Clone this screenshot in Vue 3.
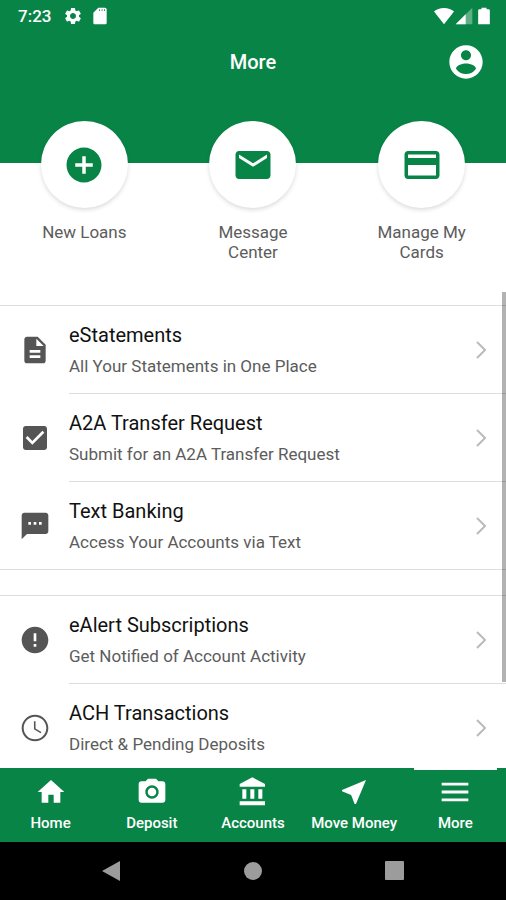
<template>
  <div class="screen">
    <header class="header">
      <div class="status-bar">
        <span class="time">7:23</span>
        <svg class="status-icon" viewBox="0 0 24 24"><path :d="icons.gear" /></svg>
        <svg class="status-icon sd-icon" viewBox="0 0 24 24"><path :d="icons.sdCard" /></svg>
        <span class="spacer"></span>
        <svg class="status-icon" viewBox="0 0 24 24"><path d="M12 22 0 6.500C3 4 7 2.500 12 2.500s9 1.500 12 4z" /></svg>
        <svg class="status-icon" viewBox="0 0 24 24">
          <path d="M2 22h20V2z" fill-opacity=".35" />
          <path d="M2 22h12V10z" />
        </svg>
        <svg class="status-icon" viewBox="0 0 24 24"><path d="M17.500 4H15V2H9v2H6.500Q5 4 5 5.500V22h14V5.500Q19 4 17.500 4z" /></svg>
      </div>
      <div class="title-bar">
        <h1 class="title">More</h1>
        <button class="account-button" aria-label="Account">
          <svg viewBox="0 0 24 24"><path :d="icons.account" /></svg>
        </button>
      </div>
    </header>

    <section class="shortcuts">
      <button v-for="item in shortcuts" :key="item.label" class="shortcut">
        <span class="shortcut-circle">
          <svg viewBox="0 0 24 24"><path :d="icons[item.icon]" /></svg>
        </span>
        <span class="shortcut-label">{{ item.label }}</span>
      </button>
    </section>

    <main class="content">
      <div class="scroll-area">
        <ul v-for="(group, index) in groups" :key="index" class="group">
          <li v-for="item in group" :key="item.title">
            <a href="#" class="row">
              <svg class="row-icon" viewBox="0 0 24 24"><path :d="icons[item.icon]" /></svg>
              <span class="row-body">
                <span class="row-text">
                  <span class="row-title">{{ item.title }}</span>
                  <span class="row-subtitle">{{ item.subtitle }}</span>
                </span>
                <svg class="chevron" viewBox="0 0 10 18"><path d="M1 1l8 8-8 8" /></svg>
              </span>
            </a>
          </li>
        </ul>
      </div>
      <div class="scroll-thumb"></div>
    </main>

    <nav class="tab-bar">
      <a
        v-for="tab in tabs"
        :key="tab.label"
        href="#"
        class="tab"
        :class="{ 'tab-active': tab.label === activeTab }"
        @click.prevent="activeTab = tab.label"
      >
        <svg viewBox="0 0 24 24"><path :d="icons[tab.icon]" /></svg>
        <span>{{ tab.label }}</span>
      </a>
    </nav>

    <div class="system-bar">
      <button aria-label="Back"><svg viewBox="0 0 20 20"><path d="M19 0v20L1 10z" /></svg></button>
      <button aria-label="Home"><svg viewBox="0 0 20 20"><circle cx="10" cy="10" r="9" /></svg></button>
      <button aria-label="Recent apps"><svg viewBox="0 0 20 20"><rect width="19" height="19" rx="1" /></svg></button>
    </div>
  </div>
</template>

<script setup>
import { ref } from 'vue'

const icons = {
  gear: 'M19.140 12.940c.040-.300.060-.610.060-.940 0-.320-.020-.640-.070-.940l2.030-1.580c.180-.140.230-.410.120-.610l-1.920-3.320c-.120-.220-.370-.290-.590-.220l-2.390.960c-.500-.380-1.030-.700-1.620-.940L14.400 2.810c-.040-.240-.240-.410-.480-.410h-3.840c-.240 0-.430.170-.470.410L9.250 5.350c-.590.240-1.130.570-1.620.940L5.240 5.330c-.220-.080-.470 0-.590.220L2.740 8.870c-.120.210-.080.470.120.610l2.030 1.580c-.050.300-.090.630-.090.940s.020.640.070.940l-2.030 1.580c-.180.140-.230.410-.120.610l1.920 3.320c.120.220.370.290.590.220l2.390-.960c.500.380 1.030.700 1.620.940l.360 2.540c.050.240.240.410.480.410h3.840c.240 0 .440-.170.470-.410l.360-2.540c.590-.240 1.130-.560 1.620-.940l2.390.960c.220.080.470 0 .590-.220l1.920-3.320c.120-.220.070-.470-.120-.610l-2.010-1.580zM12 15.600c-1.980 0-3.600-1.620-3.600-3.600s1.620-3.600 3.600-3.600 3.600 1.620 3.600 3.600-1.620 3.600-3.600 3.600z',
  sdCard: 'M18 2h-8L4 8v12c0 1.100.900 2 2 2h12c1.100 0 2-.900 2-2V4c0-1.100-.900-2-2-2zm-6 4h-1V4h1zm3 0h-1V4h1zm3 0h-1V4h1z',
  account: 'M12 2C6.480 2 2 6.480 2 12s4.480 10 10 10 10-4.480 10-10S17.520 2 12 2zm0 3c1.660 0 3 1.340 3 3s-1.340 3-3 3-3-1.340-3-3 1.340-3 3-3zm0 14.200c-2.500 0-4.710-1.280-6-3.220.030-1.990 4-3.080 6-3.080 1.990 0 5.970 1.090 6 3.080-1.290 1.940-3.500 3.220-6 3.220z',
  addCircle: 'M12 2C6.480 2 2 6.480 2 12s4.480 10 10 10 10-4.480 10-10S17.520 2 12 2zm5 11h-4v4h-2v-4H7v-2h4V7h2v4h4v2z',
  mail: 'M20 4H4c-1.100 0-1.990.900-1.990 2L2 18c0 1.100.900 2 2 2h16c1.100 0 2-.900 2-2V6c0-1.100-.900-2-2-2zm0 4l-8 5-8-5V6l8 5 8-5v2z',
  card: 'M20 4H4c-1.110 0-1.990.890-1.990 2L2 18c0 1.110.890 2 2 2h16c1.110 0 2-.890 2-2V6c0-1.110-.890-2-2-2zm0 14H4v-6h16v6zm0-10H4V6h16v2z',
  document: 'M14 2H6c-1.100 0-1.990.900-1.990 2L4 20c0 1.100.890 2 1.990 2H18c1.100 0 2-.900 2-2V8l-6-6zm2 16H8v-2h8v2zm0-4H8v-2h8v2zm-3-5V3.500L18.500 9H13z',
  checkbox: 'M19 3H5c-1.110 0-2 .900-2 2v14c0 1.100.890 2 2 2h14c1.110 0 2-.900 2-2V5c0-1.100-.890-2-2-2zm-9 14l-5-5 1.410-1.410L10 14.170l7.590-7.590L19 8l-9 9z',
  message: 'M20 2H4c-1.100 0-1.990.900-1.990 2L2 22l4-4h14c1.100 0 2-.900 2-2V4c0-1.100-.900-2-2-2zM9 11H7V9h2v2zm4 0h-2V9h2v2zm4 0h-2V9h2v2z',
  alert: 'M12 2C6.480 2 2 6.480 2 12s4.480 10 10 10 10-4.480 10-10S17.520 2 12 2zm1 15h-2v-2h2v2zm0-4h-2V7h2v6z',
  clock: 'M11.990 2C6.470 2 2 6.480 2 12s4.470 10 9.990 10C17.520 22 22 17.520 22 12S17.520 2 11.990 2zM12 20.500c-4.700 0-8.500-3.800-8.500-8.500S7.300 3.500 12 3.500s8.500 3.800 8.500 8.500-3.800 8.500-8.500 8.500zM12.400 7H11.200v6l5 3 .600-1-4.400-2.700z',
  home: 'M10 20v-6h4v6h5v-8h3L12 3 2 12h3v8z',
  camera: 'M9 2L7.170 4H4c-1.100 0-2 .900-2 2v12c0 1.100.900 2 2 2h16c1.100 0 2-.900 2-2V6c0-1.100-.900-2-2-2h-3.170L15 2H9zm3 15c-2.760 0-5-2.240-5-5s2.240-5 5-5 5 2.240 5 5-2.240 5-5 5zM12 8.800a3.200 3.200 0 1 0 0 6.400 3.200 3.200 0 0 0 0-6.400z',
  bank: 'M4 10v7h3v-7H4zm6 0v7h3v-7h-3zM2 22h19v-3H2v3zm14-12v7h3v-7h-3zm-4.500-9L2 6v2h19V6l-9.500-5z',
  arrow: 'M21 3L3 10.530v.980l6.840 2.650L12.480 21h.980L21 3z',
  menu: 'M2 19h20v-2.200H2V19zm0-5.900h20v-2.200H2v2.200zM2 5v2.200h20V5H2z'
}

const shortcuts = [
  { label: 'New Loans', icon: 'addCircle' },
  { label: 'Message Center', icon: 'mail' },
  { label: 'Manage My Cards', icon: 'card' }
]

const groups = [
  [
    { title: 'eStatements', subtitle: 'All Your Statements in One Place', icon: 'document' },
    { title: 'A2A Transfer Request', subtitle: 'Submit for an A2A Transfer Request', icon: 'checkbox' },
    { title: 'Text Banking', subtitle: 'Access Your Accounts via Text', icon: 'message' }
  ],
  [
    { title: 'eAlert Subscriptions', subtitle: 'Get Notified of Account Activity', icon: 'alert' },
    { title: 'ACH Transactions', subtitle: 'Direct & Pending Deposits', icon: 'clock' }
  ]
]

const tabs = [
  { label: 'Home', icon: 'home' },
  { label: 'Deposit', icon: 'camera' },
  { label: 'Accounts', icon: 'bank' },
  { label: 'Move Money', icon: 'arrow' },
  { label: 'More', icon: 'menu' }
]

const activeTab = ref('More')
</script>

<style>
body {
  background: #fff;
}
</style>

<style scoped>
.screen {
  display: flex;
  flex-direction: column;
  height: 100vh;
  font-family: Roboto, "Liberation Sans", sans-serif;
  color: #111;
}

button {
  padding: 0;
  border: none;
  background: transparent;
  font: inherit;
  color: inherit;
  cursor: pointer;
}

a {
  color: inherit;
  text-decoration: none;
}

svg {
  display: block;
  fill: currentColor;
}

.header {
  flex-shrink: 0;
  padding-bottom: 71px;
  background: #088546;
  color: #fff;
}

.status-bar {
  display: flex;
  align-items: center;
  height: 32px;
  padding: 0 12px 0 18px;
}

.time {
  margin-right: 12px;
  font-size: 17px;
  font-weight: 500;
}

.status-icon {
  width: 20px;
  height: 20px;
}

.sd-icon {
  margin-left: 7px;
}

.spacer {
  flex: 1;
}

.title-bar {
  display: grid;
  grid-template-columns: 40px 1fr 40px;
  align-items: center;
  height: 60px;
  padding: 0 20px;
}

.title {
  grid-column: 2;
  margin: 0;
  font-size: 20px;
  font-weight: 500;
  text-align: center;
}

.account-button svg {
  width: 40px;
  height: 40px;
}

.shortcuts {
  display: grid;
  grid-template-columns: repeat(3, 1fr);
  flex-shrink: 0;
  margin-top: -42px;
  padding-bottom: 30px;
}

.shortcut {
  display: flex;
  flex-direction: column;
  align-items: center;
  gap: 14px;
}

.shortcut-circle {
  display: flex;
  align-items: center;
  justify-content: center;
  width: 87px;
  height: 87px;
  border-radius: 50%;
  background: #fff;
  box-shadow: 0 2px 4px rgba(0, 0, 0, 0.14);
  color: #088546;
}

.shortcut-circle svg {
  width: 42px;
  height: 42px;
}

.shortcut-label {
  max-width: 100px;
  font-size: 17px;
  line-height: 20px;
  color: #5c5c5c;
}

.content {
  position: relative;
  flex: 1;
  min-height: 0;
}

.scroll-area {
  height: 100%;
  padding-top: 13px;
  box-sizing: border-box;
  overflow: hidden;
}

.scroll-thumb {
  position: absolute;
  top: 0;
  right: 0;
  width: 4px;
  height: 82%;
  background: rgba(0, 0, 0, 0.3);
}

.group {
  margin: 0 0 25px;
  padding: 0;
  list-style: none;
  border-top: 1px solid #ddd;
  border-bottom: 1px solid #ddd;
}

.row {
  display: flex;
  align-items: center;
}

.row-icon {
  flex-shrink: 0;
  width: 32px;
  height: 32px;
  margin: 0 18px 0 19px;
  color: #555;
}

.row-body {
  display: flex;
  flex: 1;
  align-items: center;
  justify-content: space-between;
  height: 87px;
  padding-right: 20px;
  border-bottom: 1px solid #ddd;
}

.group li:last-child .row-body {
  border-bottom: none;
}

.row-text {
  display: flex;
  flex-direction: column;
  gap: 6px;
}

.row-title {
  font-size: 20px;
  line-height: 26px;
}

.row-subtitle {
  font-size: 17px;
  line-height: 24px;
  color: #5c5c5c;
}

.chevron {
  width: 10px;
  height: 18px;
  fill: none;
  stroke: #bbb;
  stroke-width: 2;
}

.tab-bar {
  display: grid;
  grid-template-columns: repeat(5, 1fr);
  flex-shrink: 0;
  height: 74px;
  background: #088546;
  color: #fff;
}

.tab {
  position: relative;
  display: flex;
  flex-direction: column;
  align-items: center;
  gap: 5px;
  padding-top: 8px;
  font-size: 15px;
  font-weight: 500;
  line-height: 20px;
  white-space: nowrap;
}

.tab svg {
  width: 32px;
  height: 32px;
}

.tab-active::before {
  content: "";
  position: absolute;
  top: 0;
  left: 9px;
  right: 9px;
  height: 2px;
  background: #fff;
}

.system-bar {
  display: flex;
  flex-shrink: 0;
  align-items: center;
  justify-content: space-between;
  height: 58px;
  padding: 0 20%;
  background: #000;
  color: #9c9c9c;
}

.system-bar svg {
  width: 20px;
  height: 20px;
}
</style>
